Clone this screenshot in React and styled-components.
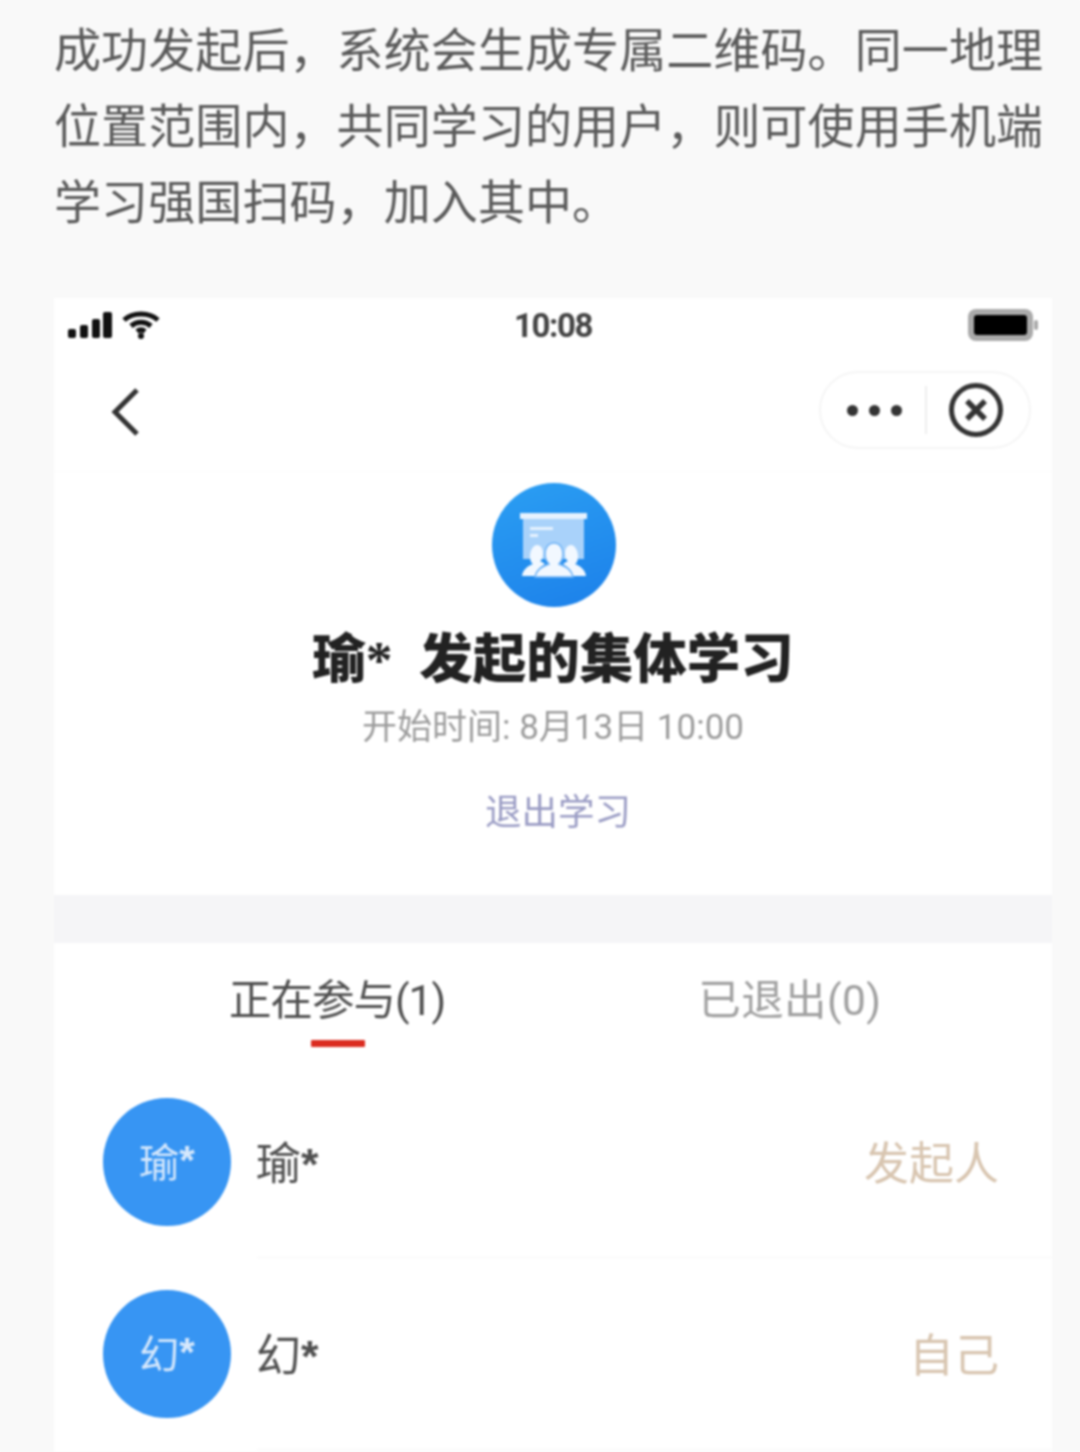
import React from "react";
import styled, { createGlobalStyle } from "styled-components";

const Global = createGlobalStyle`
  html, body { margin: 0; padding: 0; background: #f9f9f9; }
  body { font-family: Roboto, "Noto Sans CJK SC", sans-serif; overflow: hidden; }
`;
const Page = styled.div`
  width: 1080px; height: 1452px; overflow: hidden; background: #f9f9f9;
  filter: blur(0.9px);
`;
const Intro = styled.p`
  margin: 0; padding: 13px 34px 0 54px; height: 298px; box-sizing: border-box;
  font-size: 47px; line-height: 76px; color: #5a5a5a; letter-spacing: 0.1px;
`;
const Phone = styled.div`
  margin-left: 54px; width: 998px; background: #f5f5f7;
  display: flex; flex-direction: column; height: 1154px;
`;
const Status = styled.div`
  height: 54px; background: #fff; position: relative;
  display: flex; align-items: center; justify-content: space-between;
  padding: 0 12px 0 14px; box-sizing: border-box;
`;
const Signals = styled.div`display: flex; gap: 8px; align-items: center;`;
const Time = styled.span`
  font-family: Roboto, sans-serif; font-weight: 700; font-size: 33px; color: #444;
  letter-spacing: -1.4px; position: absolute; left: 460px; top: 8px; line-height: 40px;
`;
const Nav = styled.div`
  height: 120px; background: #fff; display: flex; align-items: center; justify-content: space-between;
  padding: 0 21px 0 57px; box-sizing: border-box; border-bottom: 1px solid #fbfbfb;
`;
const Capsule = styled.div`
  width: 212px; height: 78px; box-sizing: border-box; border: 2px solid #f5f5f5; border-radius: 39px;
  display: flex; align-items: center; padding-left: 26px; margin-top: -3px;
`;
const Dots = styled.div`
  display: flex; gap: 11px; width: 57px;
  & > i { width: 11px; height: 11px; border-radius: 50%; background: #333; display: block; }
`;
const Sep = styled.div`width: 2px; height: 48px; background: #eee; margin: 0 22px 0 21px;`;
const Hero = styled.section`
  background: #fff; height: 423px; display: flex; flex-direction: column; align-items: center;
`;
const Logo = styled.div`
  width: 124px; height: 124px; border-radius: 50%; margin: 11px 0 0 1px;
  background: linear-gradient(160deg, #2b9ff3, #1c80ea);
  display: flex; align-items: center; justify-content: center;
`;
const Title = styled.h1`
  margin: 23px 0 0; font-size: 53.5px; line-height: 60px; font-weight: 900; color: #222;
  font-family: "Liberation Serif", "Noto Sans CJK SC", serif; white-space: pre;
`;
const Sub = styled.div`
  margin-top: 16px; font-size: 35px; line-height: 44px; color: #9c9c9c;
`;
const Quit = styled.div`
  margin-top: 41px; margin-left: 10px; font-size: 36.5px; line-height: 44px; color: #9a9cc4;
`;
const Lower = styled.section`
  background: #fff; margin-top: 48px; flex: 1;
`;
const Tabs = styled.div`
  display: flex; gap: 253px; padding: 31px 0 0 175px; height: 123px; box-sizing: border-box;
`;
const Tab = styled.div`
  position: relative; height: 54px; font-size: 42.5px; line-height: 54px; white-space: nowrap;
  color: ${(p) => (p.$active ? "#4f4f4f" : "#a0a0a0")};
  letter-spacing: ${(p) => (p.$active ? "-1px" : "0.4px")};
  ${(p) => p.$active && `&::after {
    content: ""; position: absolute; left: 82px; top: 66px; width: 54px; height: 7px;
    background: #db2c20; border-radius: 1px;
  }`}
`;
const Row = styled.div`
  height: 192px; display: flex; align-items: center; padding: 0 54px 0 49px; box-sizing: border-box;
  position: relative;
  &::after {
    content: ""; position: absolute; left: 203px; right: 0; bottom: 0; height: 1px; background: #f7f7f7;
  }
`;
const Avatar = styled.div`
  width: 128px; height: 128px; border-radius: 50%; background: #3795f3; color: #d6e8fc;
  display: flex; align-items: center; justify-content: center; font-size: 40px; flex: none;
  padding-bottom: 4px; box-sizing: border-box;
`;
const Star = styled.span`font-family: "Liberation Sans", sans-serif; font-weight: 700;`;
const Name = styled.div`margin: -3px 0 0 25px; font-size: 45px; color: #4f4f4f; flex: 1;`;
const Role = styled.div`margin: -3px -1px 0 0; font-size: 45px; color: #d8c5b0;`;

const Signal = () => (
  <svg width="46" height="28" viewBox="0 0 46 28" fill="#111">
    <rect x="0" y="18" width="8" height="9" rx="2" /><rect x="12" y="14" width="8" height="13" rx="2" />
    <rect x="24" y="8" width="8" height="19" rx="2" /><rect x="35" y="1" width="9" height="26" rx="2" />
  </svg>
);
const Wifi = () => (
  <svg width="38" height="30" viewBox="0 0 38 30" fill="none" stroke="#111" strokeWidth="5">
    <path d="M2 10C11 2 27 2 36 10" /><path d="M9 16C15 11 23 11 29 16" /><path d="M15 21.500C17.500 19.500 20.500 19.500 23 21.500" />
    <circle cx="19" cy="26" r="3" fill="#111" stroke="none" />
  </svg>
);
const Battery = () => (
  <svg width="72" height="32" viewBox="0 0 72 32">
    <rect x="0" y="0" width="65" height="32" rx="8" fill="#aaa" />
    <rect x="6" y="6" width="53" height="20" rx="3" fill="#000" />
    <rect x="66" y="11" width="4" height="10" rx="2" fill="#aaa" />
  </svg>
);
const Back = () => (
  <svg width="30" height="50" viewBox="0 0 30 50" fill="none" stroke="#333" strokeWidth="5">
    <path d="M26 3L4 25L26 47" strokeLinejoin="miter" />
  </svg>
);
const Close = () => (
  <svg width="54" height="54" viewBox="0 0 54 54" fill="none" stroke="#333">
    <circle cx="27" cy="27" r="24.500" strokeWidth="5" />
    <path d="M18 18L36 36M36 18L18 36" strokeWidth="5.500" />
  </svg>
);
const SideBust = "M18 33c4 0 6 4 6 8 0 4-1 7-3 8 2 1 4 2 5 3-5 3-9 7-10 12H3c1-7 6-10 11-12-2-1-3-4-3-8 0-5 3-11 7-11z";
const CenterBust = "M35 31c6 0 9 5 9 11 0 5-2 8-4 10 5 2 12 4 14 13H16c2-9 9-11 14-13-2-2-4-5-4-10 0-6 3-11 9-11z";
const Board = () => (
  <svg width="70" height="66" viewBox="0 0 70 66">
    <rect x="1" y="1" width="67" height="6" fill="#e6f2fe" />
    <rect x="4" y="7" width="61" height="40" fill="#a9d2fa" />
    <rect x="11" y="15" width="23" height="3" fill="#e6f2fe" />
    <rect x="11" y="22" width="8" height="3" fill="#e6f2fe" />
    <g fill="#f2f8ff">
      <path d={SideBust} />
      <path d={SideBust} transform="translate(70 0) scale(-1 1)" />
      <path d={CenterBust} stroke="#6fb3f6" strokeWidth="1.500" />
    </g>
  </svg>
);

export default function App() {
  return (
    <>
      <Global />
      <Page>
        <Intro>
          成功发起后，系统会生成专属二维码。同一地理位置范围内，共同学习的用户，则可使用手机端学习强国扫码，加入其中。
        </Intro>
        <Phone>
          <Status>
            <Signals><Signal /><Wifi /></Signals>
            <Time>10:08</Time>
            <Battery />
          </Status>
          <Nav>
            <Back />
            <Capsule>
              <Dots><i /><i /><i /></Dots>
              <Sep />
              <Close />
            </Capsule>
          </Nav>
          <Hero>
            <Logo><Board /></Logo>
            <Title>瑜*  发起的集体学习</Title>
            <Sub>开始时间: 8月13日 10:00</Sub>
            <Quit>退出学习</Quit>
          </Hero>
          <Lower>
            <Tabs>
              <Tab $active>正在参与(1)</Tab>
              <Tab>已退出(0)</Tab>
            </Tabs>
            <Row>
              <Avatar>瑜<Star>*</Star></Avatar>
              <Name>瑜<Star>*</Star></Name>
              <Role>发起人</Role>
            </Row>
            <Row>
              <Avatar>幻<Star>*</Star></Avatar>
              <Name>幻<Star>*</Star></Name>
              <Role>自己</Role>
            </Row>
          </Lower>
        </Phone>
      </Page>
    </>
  );
}
